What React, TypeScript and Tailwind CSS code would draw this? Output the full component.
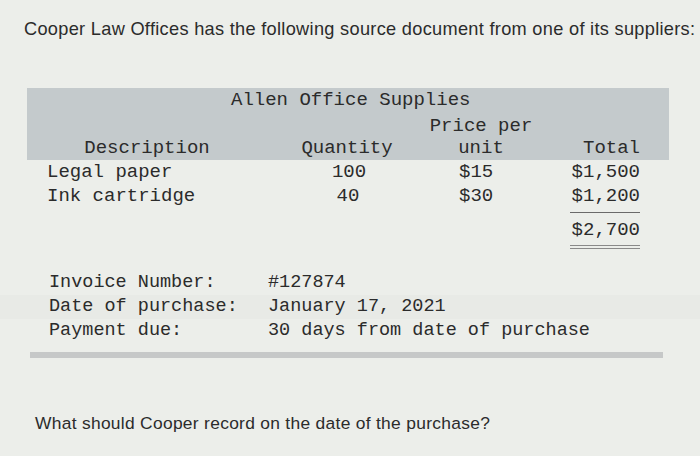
const mono = "font-['Liberation_Mono','Courier_New',monospace]";

export default function App() {
  return (
    <div className="w-[700px] h-[456px] overflow-hidden bg-[#eceeea] text-[#2b2b2b] font-['Liberation_Sans',Arial,sans-serif]">
      <p className="pl-[24px] pt-[17px] whitespace-nowrap text-[18.2px] leading-[24px] tracking-[0.3px]">
        Cooper Law Offices has the following source document from one of its suppliers:
      </p>

      <div className={`${mono} ml-[27px] mt-[47px] w-[642px] text-[19px] leading-[24px]`}>
        <div className="bg-[#c4cacc]">
          <div className="pl-[204px]">Allen Office Supplies</div>
          <div className="grid grid-cols-[240px_160px_108px_134px] pt-[2px]">
            <div />
            <div />
            <div className="text-center">Price per</div>
            <div />
          </div>
          <div className="grid grid-cols-[240px_160px_108px_134px] h-[22px] leading-[20px]">
            <div className="text-center">Description</div>
            <div className="text-center">Quantity</div>
            <div className="text-center">unit</div>
            <div className="text-right pr-[29px]">Total</div>
          </div>
        </div>

        <div className="grid grid-cols-[240px_160px_108px_134px]">
          <div className="pl-[20px]">
            <div>Legal paper</div>
            <div>Ink cartridge</div>
          </div>
          <div className="text-center">
            <div className="pl-[4px]">100</div>
            <div className="pl-[2px]">40</div>
          </div>
          <div className="pl-[32px]">
            <div>$15</div>
            <div>$30</div>
          </div>
          <div className="pl-[35px]">
            <div className="w-[83px] text-right pr-[13px]">
              <div>$1,500</div>
              <div className="pb-[4px] border-b border-[#6a6a6a]">$1,200</div>
              <div className="pt-[5px] pb-[3px]">$2,700</div>
              <div className="h-px bg-[#8a8a8a]" />
              <div className="h-[2px]" />
              <div className="h-px bg-[#8a8a8a]" />
            </div>
          </div>
        </div>
      </div>

      <div className={`${mono} mt-[22px] text-[18.5px] leading-[24px]`}>
        <div className="flex pl-[49px]">
          <div className="w-[219px]">Invoice Number:</div>
          <div>#127874</div>
        </div>
        <div className="flex pl-[49px] bg-[#e8eae6]">
          <div className="w-[219px]">Date of purchase:</div>
          <div>January 17, 2021</div>
        </div>
        <div className="flex pl-[49px]">
          <div className="w-[219px]">Payment due:</div>
          <div>30 days from date of purchase</div>
        </div>
        <div className="ml-[30px] mt-[9px] w-[633px] h-[6px] bg-[#c6c8c8]" />
      </div>

      <p className="pl-[35px] mt-[54px] whitespace-nowrap text-[17.4px] leading-[22px] tracking-[0.3px]">
        What should Cooper record on the date of the purchase?
      </p>
    </div>
  );
}
